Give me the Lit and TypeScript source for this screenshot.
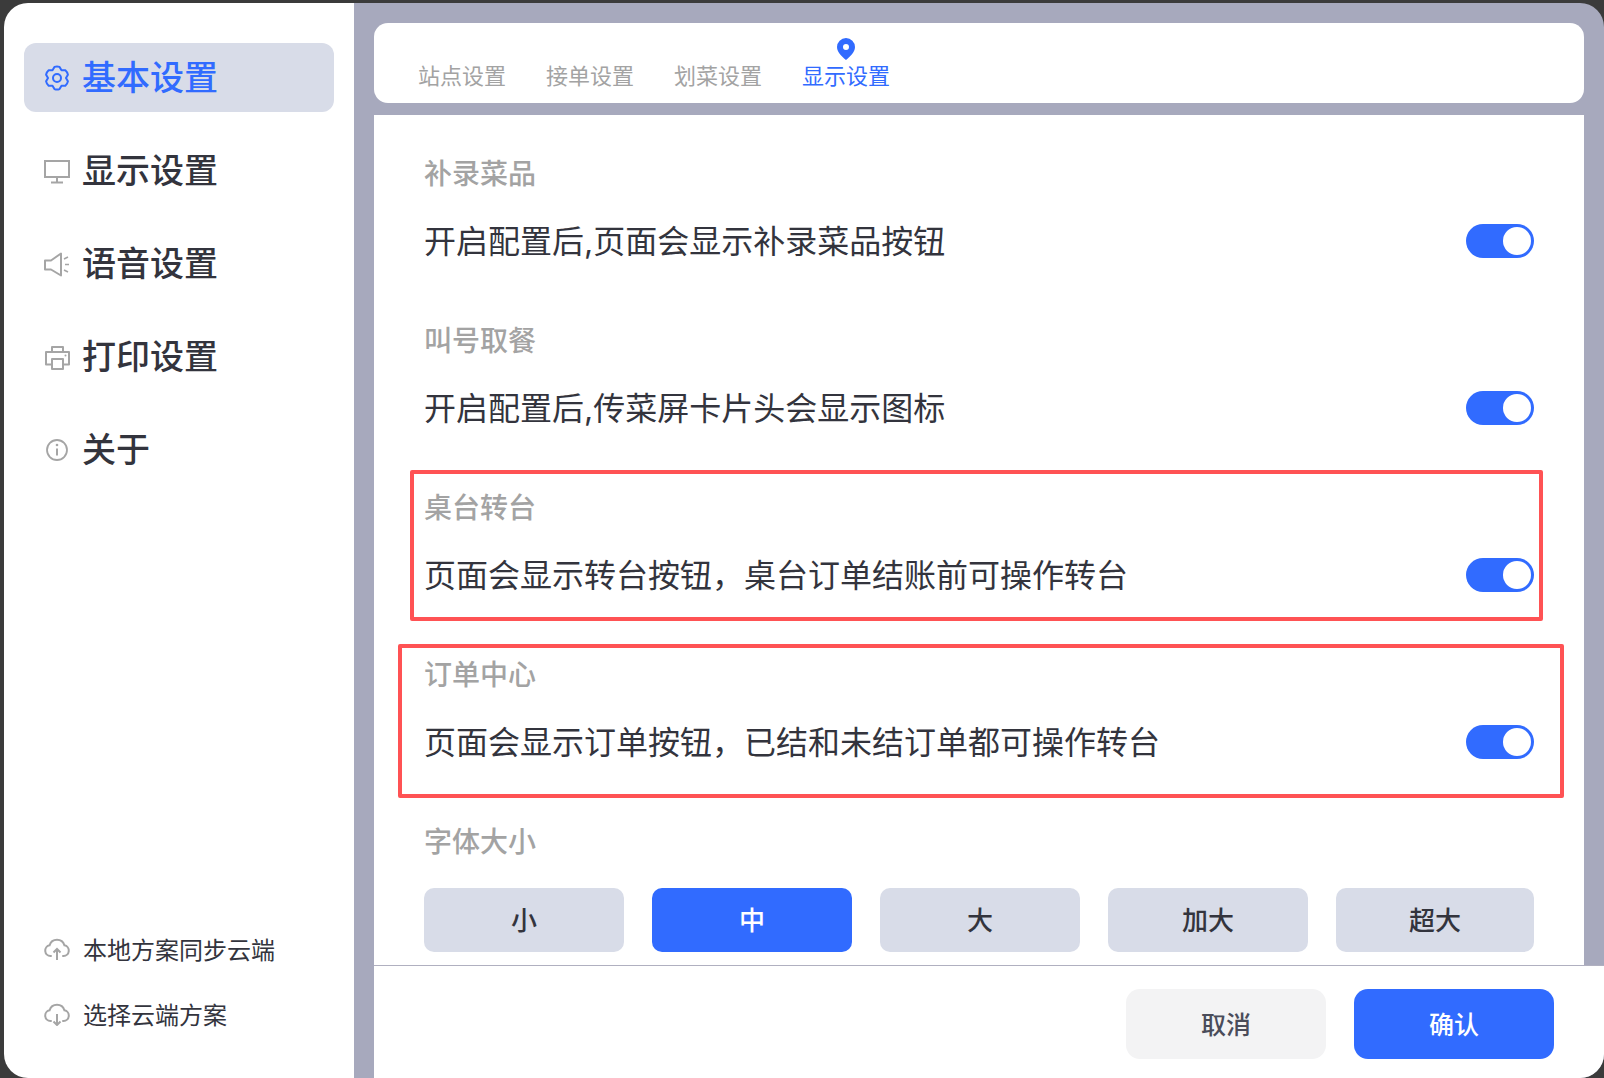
import { LitElement, html, css, svg } from 'lit'
import { customElement } from 'lit/decorators.js'

// six rounded lobes, pointy side up
const gearPath = () => {
	const pt = (deg: number, r: number) => {
		const a = (deg * Math.PI) / 180
		return `${(13 + r * Math.cos(a)).toFixed(2)} ${(13 + r * Math.sin(a)).toFixed(2)}`
	}
	let d = ''
	for (let i = 0; i < 6; i++) {
		const c = -90 + i * 60
		d += `${i ? 'L' : 'M'}${pt(c - 13, 11.4)}Q${pt(c, 12)} ${pt(c + 13, 11.4)}L${pt(c + 30, 9)}`
	}
	return d + 'Z'
}

const gear = svg`<path d="${gearPath()}" fill="none" stroke="currentColor" stroke-width="2" stroke-linejoin="round"/><circle cx="13" cy="13" r="4" fill="none" stroke="currentColor" stroke-width="2"/>`
const monitor = svg`<path d="M1 3h24v16H1zM13 19v5M7 24.500h12" fill="none" stroke="currentColor" stroke-width="2"/>`
const speaker = svg`<path d="M1 9.500h6L17 2.500v22L7 18.500H1z" fill="none" stroke="currentColor" stroke-width="2" stroke-linejoin="round"/><path d="M20 8l4-2M21 13.500h4M20 19l4 2" fill="none" stroke="currentColor" stroke-width="1.600"/>`
const printer = svg`<path d="M8 8V3h11v5M8 20.500H2V8h23v12.500h-6M8 15h11v10H8z" fill="none" stroke="currentColor" stroke-width="2" stroke-linejoin="round"/><circle cx="21.500" cy="11.500" r="1" fill="currentColor"/>`
const info = svg`<circle cx="13" cy="13" r="10" fill="none" stroke="currentColor" stroke-width="1.800"/><path d="M13 11.500v7" stroke="currentColor" stroke-width="2"/><circle cx="13" cy="8" r="1.300" fill="currentColor"/>`
const cloudUp = svg`<path d="M7 21H6.500a5.400 5.400 0 0 1-.9-10.700 7.700 7.700 0 0 1 14.800 0A5.400 5.400 0 0 1 19.500 21H19" fill="none" stroke="currentColor" stroke-width="2" stroke-linecap="round"/><path d="M13 25V14M9.500 17.500l3.500-3.500 3.500 3.500" fill="none" stroke="currentColor" stroke-width="2"/>`
const cloudDown = svg`<path d="M7 21H6.500a5.400 5.400 0 0 1-.9-10.700 7.700 7.700 0 0 1 14.800 0A5.400 5.400 0 0 1 19.500 21H19" fill="none" stroke="currentColor" stroke-width="2" stroke-linecap="round"/><path d="M13 14v11M9.500 21.500l3.500 3.500 3.500-3.500" fill="none" stroke="currentColor" stroke-width="2"/>`

const MENU = [
	{ label: '基本设置', icon: gear, active: true },
	{ label: '显示设置', icon: monitor },
	{ label: '语音设置', icon: speaker },
	{ label: '打印设置', icon: printer },
	{ label: '关于', icon: info },
]

const TABS = ['站点设置', '接单设置', '划菜设置', '显示设置']

const SECTIONS = [
	{ title: '补录菜品', text: '开启配置后,页面会显示补录菜品按钮' },
	{ title: '叫号取餐', text: '开启配置后,传菜屏卡片头会显示图标' },
	{ title: '桌台转台', text: '页面会显示转台按钮，桌台订单结账前可操作转台' },
	{ title: '订单中心', text: '页面会显示订单按钮，已结和未结订单都可操作转台' },
]

const SIZES = ['小', '中', '大', '加大', '超大']

@customElement('app-root')
export class AppRoot extends LitElement {
	static styles = css`
		:host {
			display: block;
			width: 1604px;
			height: 1078px;
			box-sizing: border-box;
			padding: 3px 0 0 4px;
			background: #3b3b3b;
			font-family: 'Inter', 'Noto Sans CJK SC', sans-serif;
			color: #33343d;
			position: relative;
			overflow: hidden;
		}
		.shell {
			display: grid;
			grid-template-columns: 350px minmax(0, 1fr);
			height: 100%;
			border-radius: 24px;
			overflow: hidden;
		}
		.side {
			background: #fff;
			display: flex;
			flex-direction: column;
			padding: 40px 20px 0;
		}
		.menu {
			display: flex;
			flex-direction: column;
			gap: 24px;
			flex: 1;
		}
		.item {
			display: flex;
			align-items: center;
			gap: 12px;
			height: 69px;
			padding-left: 20px;
			border-radius: 12px;
			font-size: 34px;
			font-weight: 500;
		}
		.item span {
			padding-bottom: 4px;
		}
		.item svg,
		.cloud svg {
			width: 26px;
			height: 26px;
			flex: none;
			color: #a5a5a5;
		}
		.item.active {
			background: #d8dce8;
			color: #316bff;
		}
		.item.active svg {
			color: #316bff;
		}
		.clouds {
			display: flex;
			flex-direction: column;
			gap: 29px;
			padding: 0 0 47px 20px;
		}
		.cloud {
			display: flex;
			align-items: center;
			gap: 13px;
			height: 36px;
			font-size: 24px;
		}
		.main {
			background: #a7a9bd;
			display: flex;
			flex-direction: column;
			min-height: 0;
			padding-left: 20px;
		}
		.upper {
			flex: 1;
			min-height: 0;
			display: flex;
			flex-direction: column;
			gap: 12px;
			padding: 20px 20px 0 0;
		}
		.tabs {
			flex: none;
			height: 80px;
			box-sizing: border-box;
			background: #fff;
			border-radius: 14px;
			display: flex;
			gap: 40px;
			padding-left: 44px;
		}
		.tab {
			position: relative;
			font-size: 22px;
			line-height: 30px;
			padding-top: 38px;
			color: #a3a3a3;
		}
		.tab.active {
			color: #316bff;
		}
		.pin {
			position: absolute;
			top: 15px;
			left: 34px;
			width: 20px;
			height: 22px;
		}
		.content {
			flex: 1;
			min-height: 0;
			overflow: hidden;
			background: #fff;
			padding: 40px 50px 0 50px;
		}
		.section {
			height: 167px;
		}
		.title {
			font-size: 28px;
			line-height: 38px;
			font-weight: 500;
			color: #a3a3a3;
		}
		.row {
			display: flex;
			align-items: center;
			justify-content: space-between;
			margin-top: 31px;
			font-size: 32px;
			line-height: 34px;
		}
		.switch {
			width: 68px;
			height: 34px;
			margin-bottom: 2px;
			box-sizing: border-box;
			border-radius: 17px;
			background: #316bff;
			padding: 3px;
			display: flex;
			justify-content: flex-end;
		}
		.switch::after {
			content: '';
			width: 28px;
			height: 28px;
			border-radius: 50%;
			background: #fff;
		}
		.sizes {
			display: grid;
			grid-template-columns: repeat(4, 200px) minmax(0, 1fr);
			gap: 28px;
			margin-top: 27px;
		}
		.size,
		.btn {
			display: flex;
			align-items: center;
			justify-content: center;
			border-radius: 10px;
			font-weight: 500;
			box-sizing: border-box;
		}
		.size {
			height: 64px;
			padding-bottom: 4px;
			background: #d8dce8;
			font-size: 26px;
		}
		.size.active,
		.btn.primary {
			background: #316bff;
			color: #fff;
		}
		.footer {
			flex: none;
			height: 113px;
			box-sizing: border-box;
			background: #fff;
			border-top: 1px solid #b0b0c0;
			display: flex;
			justify-content: flex-end;
			gap: 28px;
			padding: 23px 50px 0 0;
		}
		.btn {
			width: 200px;
			height: 70px;
			padding-bottom: 2px;
			border-radius: 14px;
			background: #f3f3f4;
			color: #4a4c5a;
			font-size: 25px;
		}
		.mark {
			position: absolute;
			border: 4px solid #ff5254;
			border-radius: 2px;
			box-sizing: border-box;
		}
		.mark.one {
			left: 410px;
			top: 470px;
			width: 1133px;
			height: 151px;
		}
		.mark.two {
			left: 398px;
			top: 644px;
			width: 1166px;
			height: 154px;
		}
	`

	render() {
		return html`
			<div class="shell">
				<aside class="side">
					<nav class="menu">
						${MENU.map(
							(m) => html`
								<div class="item ${m.active ? 'active' : ''}">
									<svg viewBox="0 0 26 26">${m.icon}</svg>
									<span>${m.label}</span>
								</div>
							`,
						)}
					</nav>
					<div class="clouds">
						<div class="cloud"><svg viewBox="0 0 26 26">${cloudUp}</svg><span>本地方案同步云端</span></div>
						<div class="cloud"><svg viewBox="0 0 26 26">${cloudDown}</svg><span>选择云端方案</span></div>
					</div>
				</aside>
				<main class="main">
					<div class="upper">
						<div class="tabs">
							${TABS.map(
								(t, i) => html`
									<div class="tab ${i === 3 ? 'active' : ''}">
										${i === 3
											? html`<svg class="pin" viewBox="0 0 20 22">
													<path
														fill-rule="evenodd"
														fill="#316bff"
														d="M10 22C6 18.500 1 14.500 1 9a9 9 0 0 1 18 0c0 5.500-5 9.500-9 13zm0-10a3 3 0 1 0 0-6 3 3 0 0 0 0 6z"
													/>
												</svg>`
											: ''}
										${t}
									</div>
								`,
							)}
						</div>
						<div class="content">
							${SECTIONS.map(
								(s) => html`
									<section class="section">
										<div class="title">${s.title}</div>
										<div class="row"><span>${s.text}</span><div class="switch"></div></div>
									</section>
								`,
							)}
							<div class="title">字体大小</div>
							<div class="sizes">
								${SIZES.map((s, i) => html`<div class="size ${i === 1 ? 'active' : ''}">${s}</div>`)}
							</div>
						</div>
					</div>
					<div class="footer">
						<div class="btn">取消</div>
						<div class="btn primary">确认</div>
					</div>
				</main>
			</div>
			<div class="mark one"></div>
			<div class="mark two"></div>
		`
	}
}
